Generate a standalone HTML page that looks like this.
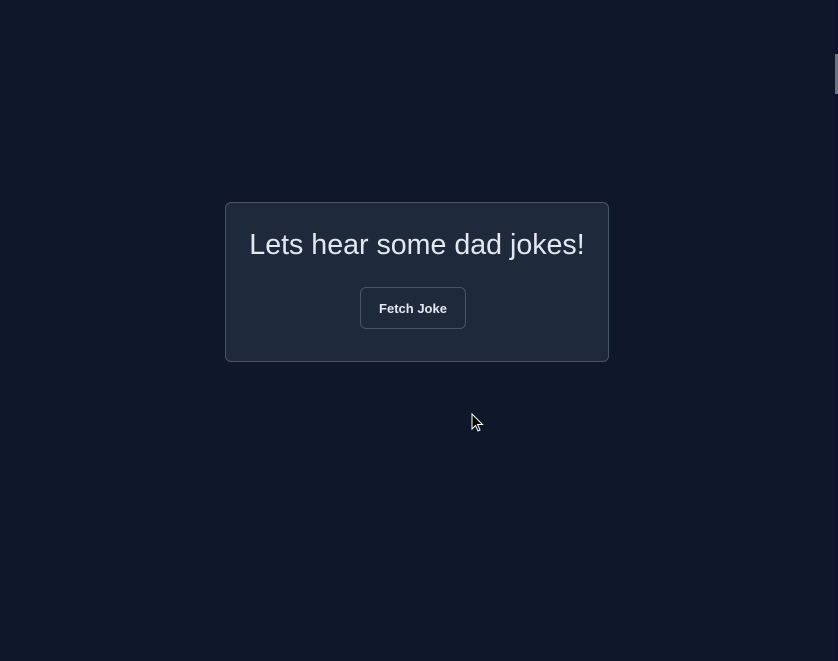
<!DOCTYPE html>
<html><head><style>
html,body{margin:0;padding:0;width:838px;height:661px;background:#0f172a;overflow:hidden;font-family:"Liberation Sans",sans-serif;}
.card{position:absolute;left:225px;top:202px;width:382px;height:158px;background:#1e293b;border:1px solid #475569;border-radius:6px;box-sizing:content-box;}
h1{position:absolute;left:0;right:0;top:24px;margin:0;text-align:center;font-weight:400;font-size:28.6px;color:#e2e8f0;line-height:37px;}
.btn{position:absolute;left:134px;top:84px;width:104px;height:40px;border:1px solid #475569;border-radius:6px;color:#e2e8f0;font-size:13px;font-weight:bold;text-align:center;line-height:42px;}
.sb{position:absolute;right:0;top:0;width:3px;height:661px;background:#120f3a;}
.th{position:absolute;right:0;top:54px;width:3px;height:40px;background:#6b7280;}
</style></head><body>
<div class="card"><h1>Lets hear some dad jokes!</h1><div class="btn">Fetch Joke</div></div>
<div class="sb"></div><div class="th"></div>
<svg style="position:absolute;left:471px;top:413px" width="14" height="20" viewBox="0 0 14 20"><path d="M1 1 L1 16 L4.5 12.5 L7 18 L9 17 L6.5 11.5 L11.5 11.5 Z" fill="#000" stroke="#fff" stroke-width="1"/></svg>
</body></html>
